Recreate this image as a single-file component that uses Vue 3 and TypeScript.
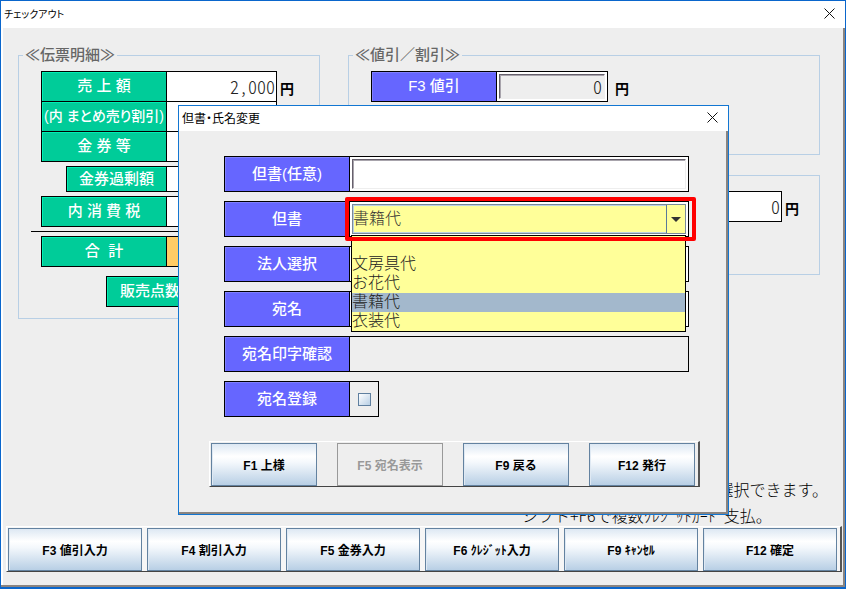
<script setup lang="ts">
import { ref } from 'vue'

interface SlipRow {
  id: string
  label: string
  value: string
  kind: string
  unit?: string
}

interface FunctionKey {
  label: string
  disabled?: boolean
}

const slipRows: SlipRow[] = [
  { id: 'sales', label: '売 上 額', value: '2,000', kind: 'joined', unit: '円' },
  { id: 'bundle', label: '(内 まとめ売り割引)', value: '', kind: 'joined dense' },
  { id: 'voucher', label: '金 券 等', value: '', kind: 'last' },
  { id: 'excess', label: '金券過剰額', value: '', kind: 'short' },
  { id: 'tax', label: '内 消 費 税', value: '', kind: 'last' },
]

const mainKeys: FunctionKey[] = [
  { label: 'F3 値引入力' },
  { label: 'F4 割引入力' },
  { label: 'F5 金券入力' },
  { label: 'F6 ｸﾚｼﾞｯﾄ入力' },
  { label: 'F9 ｷｬﾝｾﾙ' },
  { label: 'F12 確定' },
]

const dialogKeys: FunctionKey[] = [
  { label: 'F1 上様' },
  { label: 'F5 宛名表示', disabled: true },
  { label: 'F9 戻る' },
  { label: 'F12 発行' },
]

const options: string[] = ['', '文房具代', 'お花代', '書籍代', '衣装代']
const proviso = ref<string>('書籍代')
const note = ref<string>('')
const register = ref<boolean>(false)
</script>

<template>
  <main class="window">
    <header class="titlebar">
      <h1>チェックアウト</h1>
      <button class="close" type="button" aria-label="閉じる">
        <svg width="11" height="11" viewBox="0 0 11 11"><path d="M0.5 0.5L10.5 10.5M10.5 0.5L0.5 10.5" /></svg>
      </button>
    </header>

    <div class="content">
      <fieldset class="group slip">
        <legend>≪伝票明細≫</legend>
        <div v-for="row in slipRows" :key="row.id" class="row" :class="row.kind">
          <label class="tag green" :for="row.id">{{ row.label }}</label>
          <input :id="row.id" class="amount" type="text" :value="row.value" readonly />
          <span v-if="row.unit" class="unit">{{ row.unit }}</span>
        </div>
        <hr />
        <div class="row total">
          <label class="tag green" for="total">合&nbsp; 計</label>
          <input id="total" class="amount orange" type="text" readonly />
        </div>
        <div class="row count">
          <label class="tag green" for="count">販売点数</label>
          <input id="count" class="amount" type="text" readonly />
        </div>
      </fieldset>

      <div class="side">
        <fieldset class="group discount">
          <legend>≪値引／割引≫</legend>
          <div class="row">
            <label class="tag violet" for="discount">F3 値引</label>
            <div class="well"><input id="discount" class="sunken gray" type="text" value="0" readonly /></div>
            <span class="unit wide">円</span>
          </div>
        </fieldset>
        <fieldset class="group payment">
          <div class="row">
            <input class="amount" type="text" value="0" aria-label="金額" readonly />
            <span class="unit">円</span>
          </div>
        </fieldset>
      </div>
    </div>

    <div class="messages">
      <p class="end">選択できます。</p>
      <p>シフト+F6で複数ｸﾚｼﾞｯﾄｶｰﾄﾞ支払。</p>
    </div>

    <footer class="keys">
      <button v-for="key in mainKeys" :key="key.label" class="key" type="button">{{ key.label }}</button>
    </footer>

    <section class="dialog" role="dialog" aria-labelledby="dialog-title">
      <header class="titlebar small">
        <h2 id="dialog-title">但書・氏名変更</h2>
        <button class="close" type="button" aria-label="閉じる">
          <svg width="11" height="11" viewBox="0 0 11 11"><path d="M0.5 0.5L10.5 10.5M10.5 0.5L0.5 10.5" /></svg>
        </button>
      </header>

      <form class="form" @submit.prevent>
        <div class="row tall">
          <label class="tag violet" for="note">但書(任意)</label>
          <div class="well grow"><input id="note" v-model="note" class="sunken" type="text" /></div>
        </div>
        <div class="row tall">
          <label class="tag violet" for="proviso">但書</label>
          <div class="well grow combo">
            <select id="proviso" v-model="proviso">
              <option v-for="item in options" :key="item" :value="item">{{ item }}</option>
            </select>
            <span class="arrow">
              <svg width="10" height="5" viewBox="0 0 10 5"><path d="M0 0H10L5 5Z" /></svg>
            </span>
            <ul class="list" role="listbox">
              <li
                v-for="item in options"
                :key="item"
                role="option"
                :aria-selected="item === proviso"
                :class="{ active: item === proviso }"
                @click="proviso = item"
              >{{ item }}</li>
            </ul>
            <div class="highlight"></div>
          </div>
        </div>
        <div class="row tall">
          <label class="tag violet" for="company">法人選択</label>
          <div class="well grow"><input id="company" class="plain" type="text" /></div>
        </div>
        <div class="row tall">
          <label class="tag violet" for="addressee">宛名</label>
          <div class="well grow"><input id="addressee" class="plain" type="text" /></div>
        </div>
        <div class="row tall">
          <label class="tag violet" for="preview">宛名印字確認</label>
          <div class="well grow flat"><input id="preview" class="plain" type="text" readonly /></div>
        </div>
        <div class="row tall">
          <label class="tag violet" for="register">宛名登録</label>
          <div class="well flat tick"><input id="register" v-model="register" type="checkbox" /></div>
        </div>
      </form>

      <footer class="keys spaced">
        <button
          v-for="key in dialogKeys"
          :key="key.label"
          class="key"
          type="button"
          :disabled="key.disabled"
        >{{ key.label }}</button>
      </footer>
    </section>
  </main>
</template>

<style>
body {
  background: #eeeeee;
}
</style>

<style scoped>
* {
  box-sizing: border-box;
}

.window {
  position: relative;
  display: flex;
  flex-direction: column;
  min-height: 100vh;
  padding-bottom: 15px;
  border: 1px solid #0a66cc;
  border-bottom-width: 2px;
  background: #eeeeee;
  box-shadow: inset -2px -2px 0 #8a8480, inset 2px 0 0 #ffffff;
  color: #000000;
  font-family: "Liberation Sans", "Noto Sans CJK JP", sans-serif;
  font-size: 16px;
}

button,
input,
select {
  margin: 0;
  padding: 0;
  font: inherit;
  color: inherit;
  border-radius: 0;
  outline: none;
}

.titlebar {
  display: flex;
  align-items: center;
  justify-content: space-between;
  height: 27px;
  padding: 0 10px 2px 3px;
  background: #ffffff;
}

.titlebar.small {
  height: 25px;
}

h1,
h2 {
  margin: 0;
  font-family: "Noto Sans CJK JP", sans-serif;
  font-size: 12px;
  line-height: 20px;
  font-weight: 400;
  font-feature-settings: "palt";
}

h1 {
  font-size: 10px;
}

.close {
  display: flex;
  border: 0;
  background: none;
}

.close svg {
  fill: none;
  stroke: #111111;
  stroke-width: 1;
}

.content {
  display: flex;
  align-items: flex-start;
  gap: 28px;
  padding: 19px 25px 0 17px;
}

.group {
  min-width: 0;
  margin: 0;
  padding: 8px 22px 11px;
  border: 1px solid #b8cfe5;
}

.slip {
  width: 302px;
}

.side {
  display: flex;
  flex: 1;
  flex-direction: column;
  gap: 20px;
}

.discount {
  height: 108px;
}

.payment {
  height: 100px;
  padding: 15px 20px 0;
}

.payment .row {
  justify-content: flex-end;
}

legend {
  margin-left: -18px;
  padding: 0 2px;
  color: #666666;
  font-size: 15px;
  line-height: 16px;
  font-weight: 500;
  font-feature-settings: "palt";
}

.row {
  display: flex;
  height: 31px;
}

.row.joined {
  margin-bottom: -1px;
}

.row.last {
  margin-bottom: 4px;
}

.row.short {
  height: 26px;
  margin-bottom: 4px;
  padding-left: 25px;
}

.row.total {
  margin-bottom: 9px;
}

.row.count {
  padding-left: 65px;
}

.row.tall {
  height: 36px;
}

.tag {
  display: flex;
  flex: none;
  align-items: center;
  justify-content: center;
  width: 126px;
  padding-bottom: 1px;
  border: 1px solid #000000;
  color: #ffffff;
  font-size: 15px;
  line-height: 20px;
  font-weight: 500;
  white-space: nowrap;
}

.green {
  background: #00cc99;
  box-shadow: inset 1px 1px 0 #00f0b4;
}

.violet {
  background: #6666ff;
  box-shadow: inset 1px 1px 0 #8080ff;
}

.short .tag {
  width: 101px;
}

.count .tag {
  width: 88px;
}

.dense .tag {
  font-size: 14px;
  font-feature-settings: "palt";
}

.amount {
  width: 111px;
  margin-left: -1px;
  padding: 0 1px 2px 0;
  border: 1px solid #000000;
  background: #ffffff;
}

.amount,
.sunken {
  color: #222222;
  font-family: "Noto Sans CJK JP", sans-serif;
  font-size: 18px;
  font-weight: 300;
  font-feature-settings: "hwid";
  text-align: right;
}

.orange {
  background: #ffcc66;
}

.unit {
  padding: 8px 0 0 3px;
  font-size: 14px;
  line-height: 20px;
  font-weight: 700;
}

.unit.wide {
  padding-left: 7px;
}

hr {
  height: 1px;
  margin: 0 40px 4px -10px;
  border: 0;
  background: #000000;
}

.well {
  display: flex;
  width: 112px;
  margin-left: -1px;
  padding: 2px;
  border: 1px solid #000000;
  background: #ffffff;
}

.well.grow {
  flex: 1;
  width: auto;
}

.well.flat {
  background: #eeeeee;
}

.sunken {
  flex: 1;
  min-width: 0;
  padding: 0 2px 2px 0;
  border: 1px solid #eeeeee;
  border-top: 1px solid #66606c;
  border-left: 1px solid #66606c;
  background: #ffffff;
  box-shadow: inset 1px 1px 0 #a8a4ac;
}

.sunken.gray {
  background: #eeeeee;
}

#note {
  text-align: left;
}

.plain {
  flex: 1;
  min-width: 0;
  border: 0;
  background: transparent;
}

.messages {
  display: flex;
  flex-direction: column;
  gap: 6px;
  width: 306px;
  margin: auto 17px 1px auto;
  font-family: "Noto Sans CJK JP", sans-serif;
  font-size: 16px;
  line-height: 20px;
  font-weight: 300;
}

.messages p {
  margin: 0;
  white-space: nowrap;
}

.messages .end {
  align-self: flex-end;
}

.keys {
  display: flex;
  gap: 5px;
  margin: 0 3px 0 5px;
  padding: 1px 3px 0 1px;
  border: 1px solid #ffffff;
  border-right: 2px solid #555555;
  border-bottom: 1px solid #444444;
  background: #f6f6f6;
}

.key {
  flex: 1;
  height: 43px;
  padding-bottom: 1px;
  border: 1px solid #6382a0;
  background: linear-gradient(#dde8f3 0%, #ffffff 30%, #f4f8fc 45%, #b8cfe5 100%);
  box-shadow: inset 1px 0 0 #dfe9f3;
  font-size: 12px;
  font-weight: 700;
  white-space: nowrap;
}

.key:disabled {
  border-color: #999999;
  background: #eeeeee;
  box-shadow: none;
  color: #999999;
}

.spaced {
  gap: 20px;
  margin: 24px 28px 0 30px;
  background: #eeeeee;
}

.dialog {
  position: absolute;
  top: 104px;
  left: 177px;
  width: 551px;
  height: 410px;
  border: 1px solid #1276d2;
  background: #eeeeee;
  box-shadow: inset -2px -2px 0 #8a8480;
}

.form {
  display: flex;
  flex-direction: column;
  gap: 9px;
  padding: 25px 39px 0 45px;
}

.combo {
  position: relative;
}

.combo select {
  flex: 1;
  min-width: 0;
  padding: 0 0 1px;
  border: 1px solid #7a8a99;
  background: #ffff99;
  box-shadow: inset 0 0 0 1px #b8cfe5;
  appearance: none;
  color: #333333;
  font-size: 16px;
  font-weight: 300;
}

.arrow {
  position: absolute;
  top: 3px;
  right: 3px;
  bottom: 3px;
  display: flex;
  align-items: center;
  width: 19px;
  padding-left: 4px;
  border-left: 1px solid #5a7a99;
  background: #ffff99;
  pointer-events: none;
}

.arrow svg {
  fill: #333333;
}

.list {
  position: absolute;
  z-index: 2;
  top: 33px;
  left: 1px;
  right: 2px;
  margin: 0;
  padding: 0;
  border: 1px solid #000000;
  background: #ffff99;
  color: #222222;
  font-size: 16px;
  font-weight: 300;
  list-style: none;
}

.list li {
  height: 19px;
  line-height: 18px;
}

.list .active {
  background: #a3b8cc;
}

.highlight {
  position: absolute;
  z-index: 3;
  top: -5px;
  left: -5px;
  right: -8px;
  bottom: -5px;
  border: 4px solid #ff0000;
  border-radius: 2px;
  pointer-events: none;
}

.well.tick {
  align-items: center;
  justify-content: center;
  width: 30px;
}

.tick input {
  width: 13px;
  height: 13px;
  border: 1px solid #5f7f9f;
  background: linear-gradient(135deg, #ffffff, #b8cfe5);
  appearance: none;
}

.tick input:checked {
  background: #6382a0;
}
</style>
